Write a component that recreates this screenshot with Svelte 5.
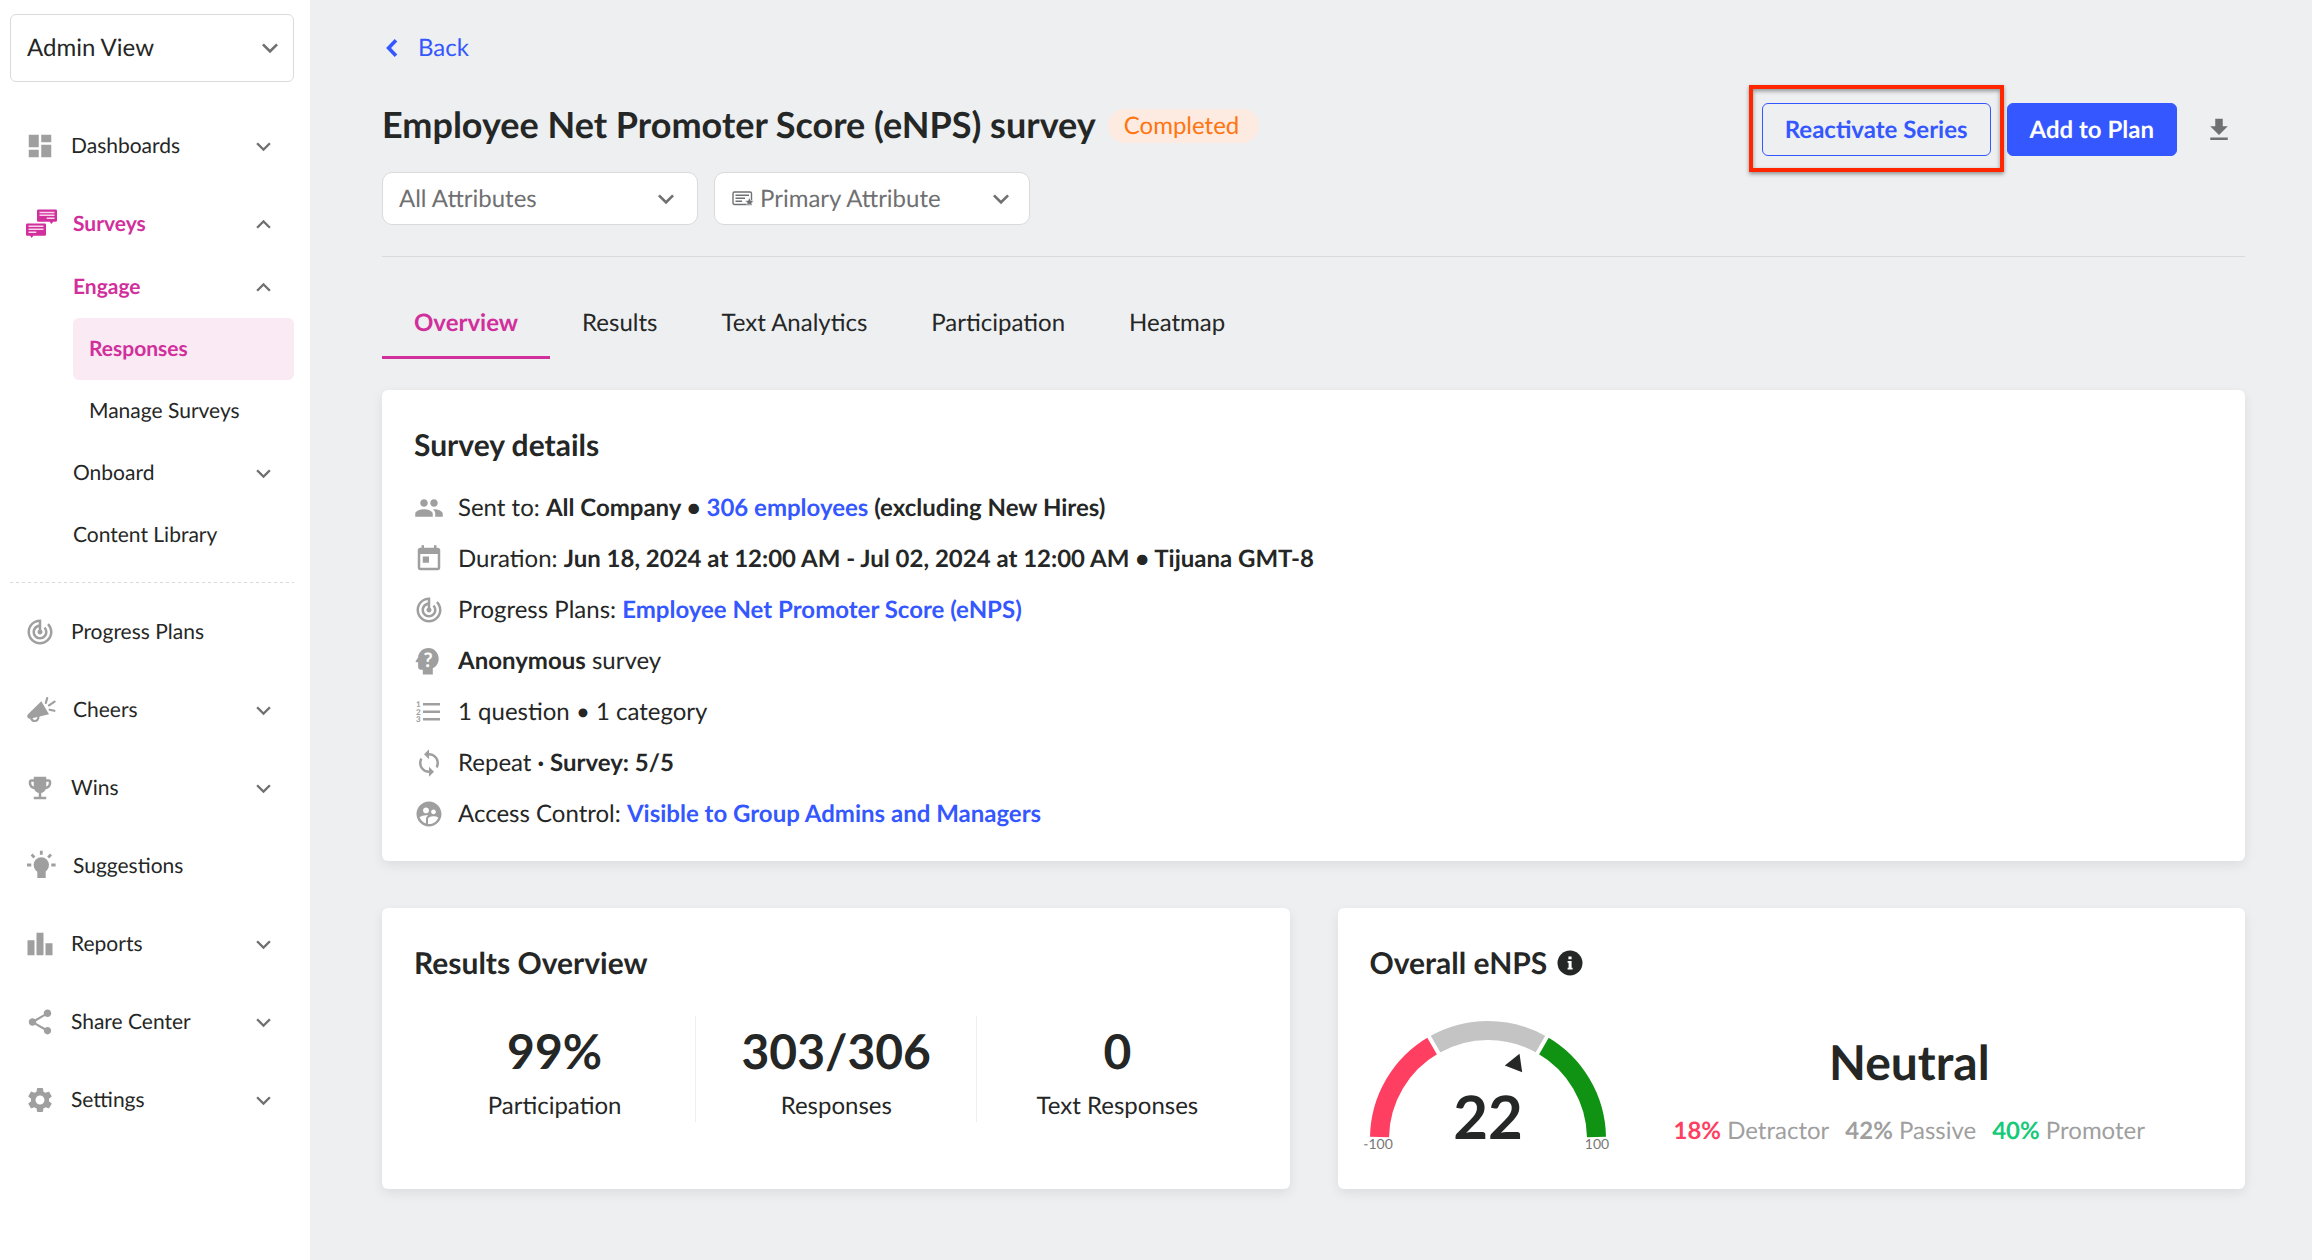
<script>
  let view = "Admin View";
  let activeTab = "Overview";

  const tabs = ["Overview", "Results", "Text Analytics", "Participation", "Heatmap"];

  const topNav = [
    { label: "Dashboards", icon: "dashboard", expandable: true },
    {
      label: "Surveys",
      icon: "surveys",
      custom: true,
      expandable: true,
      open: true,
      children: [
        { label: "Engage", expandable: true, open: true },
        { label: "Responses", nested: true, active: true },
        { label: "Manage Surveys", nested: true },
        { label: "Onboard", expandable: true },
        { label: "Content Library" },
      ],
    },
  ];

  const bottomNav = [
    { label: "Progress Plans", icon: "track" },
    { label: "Cheers", icon: "cheers", custom: true, expandable: true },
    { label: "Wins", icon: "trophy", expandable: true },
    { label: "Suggestions", icon: "bulb", custom: true },
    { label: "Reports", icon: "bars", expandable: true },
    { label: "Share Center", icon: "share", expandable: true },
    { label: "Settings", icon: "gear", expandable: true },
  ];

  const stats = [
    { value: "99%", label: "Participation" },
    { value: "303/306", label: "Responses" },
    { value: "0", label: "Text Responses" },
  ];

  const breakdown = [
    { value: "18%", label: "Detractor", kind: "detractor" },
    { value: "42%", label: "Passive", kind: "passive" },
    { value: "40%", label: "Promoter", kind: "promoter" },
  ];

  // 24x24 icon outlines
  const paths = {
    dashboard: "M3 13h8V3H3v10zm0 8h8v-6H3v6zm10 0h8V11h-8v10zm0-18v6h8V3h-8z",
    track:
      "M19.07 4.93l-1.41 1.41C19.1 7.79 20 9.79 20 12c0 4.42-3.58 8-8 8s-8-3.58-8-8c0-4.08 3.05-7.44 7-7.93v2.02C8.16 6.57 6 9.03 6 12c0 3.31 2.69 6 6 6s6-2.69 6-6c0-1.66-.67-3.16-1.76-4.24l-1.41 1.41C15.55 9.9 16 10.9 16 12c0 2.21-1.79 4-4 4s-4-1.79-4-4c0-1.86 1.28-3.41 3-3.86v2.14c-.6.35-1 .98-1 1.72 0 1.1.9 2 2 2s2-.9 2-2c0-.74-.4-1.38-1-1.72V2h-1C6.48 2 2 6.48 2 12s4.48 10 10 10 10-4.48 10-10c0-2.76-1.12-5.26-2.93-7.07z",
    trophy:
      "M19 5h-2V3H7v2H5c-1.1 0-2 .9-2 2v1c0 2.55 1.92 4.63 4.39 4.94.63 1.5 1.98 2.63 3.61 2.96V19H7v2h10v-2h-4v-3.1c1.63-.33 2.98-1.46 3.61-2.96C19.08 12.63 21 10.55 21 8V7c0-1.1-.9-2-2-2zM5 8V7h2v3.82C5.84 10.4 5 9.3 5 8zm14 0c0 1.3-.84 2.4-2 2.82V7h2v1z",
    bars: "M2 9h5.6v12H2zM9.2 3h5.6v18H9.2zM16.4 11.4H22V21h-5.6z",
    share:
      "M18 16.08c-.76 0-1.44.3-1.96.77L8.91 12.7c.05-.23.09-.46.09-.7s-.04-.47-.09-.7l7.05-4.11c.54.5 1.25.81 2.04.81 1.66 0 3-1.34 3-3s-1.34-3-3-3-3 1.34-3 3c0 .24.04.47.09.7L8.04 9.81C7.5 9.31 6.79 9 6 9c-1.66 0-3 1.34-3 3s1.34 3 3 3c.79 0 1.5-.31 2.04-.81l7.12 4.16c-.05.21-.08.43-.08.65 0 1.61 1.31 2.92 2.92 2.92s2.92-1.31 2.92-2.92-1.31-2.92-2.92-2.92z",
    gear: "M19.14 12.94c.04-.3.06-.61.06-.94 0-.32-.02-.64-.07-.94l2.03-1.58c.18-.14.23-.41.12-.61l-1.92-3.32c-.12-.22-.37-.29-.59-.22l-2.39.96c-.5-.38-1.03-.7-1.62-.94l-.36-2.54c-.04-.24-.24-.41-.48-.41h-3.84c-.24 0-.43.17-.47.41l-.36 2.54c-.59.24-1.13.57-1.62.94l-2.39-.96c-.22-.08-.47 0-.59.22L2.74 8.87c-.12.21-.08.47.12.61l2.03 1.58c-.05.3-.09.63-.09.94s.02.64.07.94l-2.03 1.58c-.18.14-.23.41-.12.61l1.92 3.32c.12.22.37.29.59.22l2.39-.96c.5.38 1.03.7 1.62.94l.36 2.54c.05.24.24.41.48.41h3.84c.24 0 .44-.17.47-.41l.36-2.54c.59-.24 1.13-.56 1.62-.94l2.39.96c.22.08.47 0 .59-.22l1.92-3.32c.12-.22.07-.47-.12-.61l-2.01-1.58zM12 15.6c-1.98 0-3.6-1.62-3.6-3.6s1.62-3.6 3.6-3.6 3.6 1.62 3.6 3.6-1.62 3.6-3.6 3.6z",
    people:
      "M16 11c1.66 0 2.99-1.34 2.99-3S17.66 5 16 5c-1.66 0-3 1.34-3 3s1.34 3 3 3zm-8 0c1.66 0 2.99-1.34 2.99-3S9.66 5 8 5C6.34 5 5 6.34 5 8s1.34 3 3 3zm0 2c-2.33 0-7 1.17-7 3.5V19h14v-2.5c0-2.33-4.67-3.5-7-3.5zm8 0c-.29 0-.62.02-.97.05 1.16.84 1.97 1.97 1.97 3.45V19h6v-2.5c0-2.33-4.67-3.5-7-3.5z",
    today:
      "M19 3h-1V1h-2v2H8V1H6v2H5c-1.11 0-1.99.9-1.99 2L3 19c0 1.1.89 2 2 2h14c1.1 0 2-.9 2-2V5c0-1.1-.9-2-2-2zm0 16H5V8h14v11zM7 10h5v5H7z",
    sync: "M12 4V1L8 5l4 4V6c3.31 0 6 2.69 6 6 0 1.01-.25 1.97-.7 2.8l1.46 1.46C19.54 15.03 20 13.57 20 12c0-4.42-3.58-8-8-8zm0 14c-3.31 0-6-2.69-6-6 0-1.01.25-1.97.7-2.8L5.24 7.74C4.46 8.97 4 10.43 4 12c0 4.42 3.58 8 8 8v3l4-4-4-4v3z",
    access:
      "M11.99 2c-5.52 0-10 4.48-10 10s4.48 10 10 10 10-4.48 10-10-4.48-10-10-10zm3.61 6.34c1.07 0 1.93.86 1.93 1.93 0 1.07-.86 1.93-1.93 1.93-1.07 0-1.93-.86-1.93-1.93-.01-1.07.86-1.93 1.93-1.93zm-6-1.58c1.3 0 2.36 1.06 2.36 2.36 0 1.3-1.06 2.36-2.36 2.36s-2.36-1.06-2.36-2.36c0-1.31 1.05-2.36 2.36-2.36zm0 9.13v3.75c-2.4-.75-4.3-2.6-5.14-4.96 1.05-1.12 3.67-1.69 5.14-1.69.53 0 1.2.08 1.9.22-1.64.87-1.9 2.02-1.9 2.68zM11.99 20c-.27 0-.53-.01-.79-.04v-4.07c0-1.42 2.94-2.13 4.4-2.13 1.07 0 2.92.39 3.84 1.15-1.17 2.97-4.06 5.09-7.45 5.09z",
    down: "M16.59 8.59L12 13.17 7.41 8.59 6 10l6 6 6-6z",
    up: "M12 8l-6 6 1.41 1.41L12 10.83l4.59 4.58L18 14z",
    download: "M19 9h-4V3H9v6H5l7 7 7-7zM5 18v2h14v-2H5z",
  };
</script>

{#snippet icon(name, size = "md")}
  <svg class="icon icon--{size}" viewBox="0 0 24 24" aria-hidden="true">
    <path d={paths[name]} />
  </svg>
{/snippet}

{#snippet customIcon(name)}
  <svg class="icon icon--lg" viewBox="0 0 32 32" aria-hidden="true">
    {#if name === "surveys"}
      <path d="M13.3 1.5h17.4q1.3 0 1.3 1.3v9.7q0 1.3-1.3 1.3h-2.6L26.4 16l-1.6-2.2H13.3q-1.3 0-1.3-1.3V2.8q0-1.3 1.3-1.3z" />
      <path d="M2.3 15.5h17.4q1.3 0 1.3 1.3v9.7q0 1.3-1.3 1.3H8.3L6.7 30l-1.6-2.2H2.3Q1 27.8 1 26.5v-9.7q0-1.3 1.3-1.3z" />
      <path class="lines" d="M14.5 4.5h15M14.5 7.3h15M21.7 10.3h7.8M3.5 18.3h15M3.5 21.3h15M3.5 24.3h7.8" />
    {:else if name === "cheers"}
      <path d="M16.3 7.3L24 20.3 6 24.5q-2.8.6-3.6-1.2-.8-1.7.6-3z" />
      <path class="stroke" d="M6 23.5q.6 3.5 3.8 3.5 3.4 0 3.7-4.5M22.2 4l-1.4 5M29.6 7.7L24 11.4M24.6 15.7l4.8 1.1" />
    {:else}
      <circle cx="16.3" cy="15" r="7.7" />
      <path d="M12.3 20h8.4v8h-8.4z" />
      <path class="stroke stroke--flat" d="M16.3.8v4M2 15h4.3M26.3 15h4.3M6.6 4.6l2.8 2.8M26 4.6l-2.8 2.8" />
    {/if}
  </svg>
{/snippet}

{#snippet navItem(item)}
  <button class="nav__item" class:nav__item--active={item.children}>
    {#if item.custom}
      {@render customIcon(item.icon)}
    {:else}
      {@render icon(item.icon)}
    {/if}
    <span class="nav__label">{item.label}</span>
    {#if item.expandable}
      <span class="nav__arrow">{@render icon(item.open ? "up" : "down", "sm")}</span>
    {/if}
  </button>
{/snippet}

<div class="layout">
  <aside class="sidebar">
    <div class="select select--view">
      <select aria-label="View" bind:value={view}>
        <option>Admin View</option>
      </select>
      <span class="select__arrow">{@render icon("down", "lg")}</span>
    </div>

    <nav class="nav">
      {#each topNav as item}
        {@render navItem(item)}
        {#if item.children}
          <div class="subnav">
            {#each item.children as child}
              <button
                class="subnav__item"
                class:subnav__item--nested={child.nested}
                class:subnav__item--current={child.active}
                class:subnav__item--open={child.open}>
                <span class="nav__label">{child.label}</span>
                {#if child.expandable}
                  <span class="nav__arrow">{@render icon(child.open ? "up" : "down", "sm")}</span>
                {/if}
              </button>
            {/each}
          </div>
        {/if}
      {/each}
    </nav>

    <hr class="sidebar__divider" />

    <nav class="nav">
      {#each bottomNav as item}
        {@render navItem(item)}
      {/each}
    </nav>
  </aside>

  <main class="main">
    <a class="back" href="#back">
      <svg class="back__icon" viewBox="0 0 12 18" aria-hidden="true">
        <path d="M10 1.3L2.6 9l7.4 7.7" />
      </svg>
      Back
    </a>

    <header class="header">
      <div class="header__info">
        <div class="header__title">
          <h1>Employee Net Promoter Score (eNPS) survey</h1>
          <span class="badge">Completed</span>
        </div>
        <div class="filters">
          <div class="select">
            <select aria-label="Attributes">
              <option>All Attributes</option>
            </select>
            <span class="select__arrow">{@render icon("down", "lg")}</span>
          </div>
          <div class="select select--icon">
            <svg class="select__icon" viewBox="0 0 22 18" aria-hidden="true">
              <rect x="1" y="2" width="18.5" height="12.5" rx="1.5" />
              <path d="M3.5 5.3h13.5M3.5 8.3h9.5M3.5 11.3h6.5" />
              <path class="star" d="M17.4 7.4l1.3 3 3.2.3-2.4 2.1.7 3.2-2.8-1.7-2.8 1.7.7-3.2-2.4-2.1 3.2-.3z" />
            </svg>
            <select aria-label="Primary attribute">
              <option>Primary Attribute</option>
            </select>
            <span class="select__arrow">{@render icon("down", "lg")}</span>
          </div>
        </div>
      </div>
      <div class="actions">
        <div class="highlight">
          <button class="btn btn--outline">Reactivate Series</button>
        </div>
        <button class="btn btn--primary">Add to Plan</button>
        <button class="btn-icon" aria-label="Download">{@render icon("download")}</button>
      </div>
    </header>

    <div class="tabs" role="tablist">
      {#each tabs as tab}
        <button
          class="tab"
          class:tab--active={tab === activeTab}
          role="tab"
          aria-selected={tab === activeTab}
          on:click={() => (activeTab = tab)}>{tab}</button>
      {/each}
    </div>

    <section class="card">
      <h2>Survey details</h2>
      <ul class="details">
        <li>
          {@render icon("people")}
          <p>Sent to: <b>All Company • <a href="#employees">306 employees</a> (excluding New Hires)</b></p>
        </li>
        <li>
          {@render icon("today")}
          <p>Duration: <b>Jun 18, 2024 at 12:00 AM - Jul 02, 2024 at 12:00 AM • Tijuana GMT-8</b></p>
        </li>
        <li>
          {@render icon("track")}
          <p>Progress Plans: <b><a href="#plan">Employee Net Promoter Score (eNPS)</a></b></p>
        </li>
        <li>
          <svg class="icon icon--md" viewBox="0 0 30 30" aria-hidden="true">
            <path d="M14.5 2C8.8 2 4.4 6.2 4.1 11.5L1.7 15.1c-.4.6 0 1.2.6 1.2h1.8v4.8c0 1.5 1.2 2.7 2.7 2.7h2v4.7h10v-6.2c3.5-1.7 5.9-5.3 5.9-9.6C24.7 6.8 20.1 2 14.5 2z" />
            <text class="glyph" x="14" y="21">?</text>
          </svg>
          <p><b>Anonymous</b> survey</p>
        </li>
        <li>
          <svg class="icon icon--md" viewBox="0 0 30 30" aria-hidden="true">
            <path d="M9 6h17v2.5H9zM9 13.5h17V16H9zM9 21h17v2.5H9z" />
            <text class="number" x="2" y="10">1</text>
            <text class="number" x="2" y="17.5">2</text>
            <text class="number" x="2" y="25">3</text>
          </svg>
          <p>1 question • 1 category</p>
        </li>
        <li>
          {@render icon("sync")}
          <p>Repeat <b>· Survey: 5/5</b></p>
        </li>
        <li>
          {@render icon("access")}
          <p>Access Control: <b><a href="#access">Visible to Group Admins and Managers</a></b></p>
        </li>
      </ul>
    </section>

    <div class="cards">
      <section class="card">
        <h2>Results Overview</h2>
        <div class="stats">
          {#each stats as stat}
            <div class="stat">
              <strong>{stat.value}</strong>
              <span>{stat.label}</span>
            </div>
          {/each}
        </div>
      </section>

      <section class="card">
        <h2>
          Overall eNPS
          <svg class="info" viewBox="0 0 26 26" aria-hidden="true">
            <circle cx="13" cy="13" r="12.5" />
            <path d="M11.4 6.5h3.2v2.7h-3.2zM10.6 11h4v6.8h1v1.7h-5v-1.7h1v-5.1h-1z" />
          </svg>
        </h2>
        <div class="enps">
          <svg class="gauge" viewBox="0 0 236 132" role="img" aria-label="eNPS score 22">
            <path class="gauge__low" d="M9.5 118A108.5 108.5 0 0 1 63.75 26.04" />
            <path class="gauge__mid" d="M63.75 26.04A108.5 108.5 0 0 1 172.25 26.04" />
            <path class="gauge__high" d="M172.25 26.04A108.5 108.5 0 0 1 226.5 118" />
            <path class="gauge__gap" d="M70 36.86L58 16.08M166 36.86L178 16.08" />
            <path class="gauge__needle" d="M149.5 34.8L134.8 46.5l17.4 6.7z" />
            <text class="gauge__score" x="118" y="120">22</text>
            <text class="gauge__limit" x="8" y="130">-100</text>
            <text class="gauge__limit" x="227" y="130">100</text>
          </svg>
          <div class="enps__summary">
            <strong>Neutral</strong>
            <ul class="breakdown">
              {#each breakdown as part}
                <li><b class={part.kind}>{part.value}</b> {part.label}</li>
              {/each}
            </ul>
          </div>
        </div>
      </section>
    </div>
  </main>
</div>

<style>
  :global(body) {
    background: #edeff1;
    color: #252726;
    font-family: Lato, "Open Sans", sans-serif;
    font-size: 24px;
    line-height: 32px;
    text-rendering: geometricPrecision;
  }
  h1,
  h2,
  p,
  ul {
    margin: 0;
    padding: 0;
  }
  ul {
    list-style: none;
  }
  a {
    color: #3557ff;
    text-decoration: none;
  }
  button,
  select {
    font: inherit;
    color: inherit;
    text-rendering: inherit;
    background: none;
    border: none;
    margin: 0;
    padding: 0;
    cursor: pointer;
  }

  .layout {
    display: flex;
    min-height: 100vh;
  }

  .icon {
    display: block;
    flex: none;
    fill: #9f9f9f;
  }
  .icon--sm {
    width: 29px;
    height: 29px;
  }
  .icon--md {
    width: 30px;
    height: 30px;
  }
  .icon--lg {
    width: 32px;
    height: 32px;
  }
  .icon .lines {
    fill: none;
    stroke: #f9d5ec;
    stroke-width: 1.6;
  }
  .icon .stroke {
    fill: none;
    stroke: #9f9f9f;
    stroke-width: 2.2;
    stroke-linecap: round;
  }
  .icon .stroke--flat {
    stroke-width: 2.8;
    stroke-linecap: butt;
  }
  .icon .glyph {
    fill: #fff;
    font-size: 20px;
    font-weight: 700;
    text-anchor: middle;
  }
  .icon .number {
    font-size: 8px;
    font-weight: 900;
    text-anchor: start;
  }

  .sidebar {
    flex: none;
    box-sizing: border-box;
    width: 310px;
    padding: 14px 16px 14px 10px;
    background: #fff;
    font-size: 21px;
  }
  .sidebar__divider {
    height: 1px;
    margin: 16px 0 18px;
    border: none;
    background: repeating-linear-gradient(90deg, #d9d9d9 0 3px, transparent 3px 6px);
  }
  .nav {
    display: flex;
    flex-direction: column;
  }
  .select--view + .nav {
    margin-top: 33px;
  }
  .nav__item,
  .subnav__item {
    display: flex;
    align-items: center;
    height: 62px;
    text-align: left;
  }
  .nav__item {
    gap: 16px;
    margin-bottom: 16px;
    padding: 0 16px 0 15px;
  }
  .nav__item--active {
    margin-bottom: 1px;
    color: #d12f9b;
    font-weight: 700;
  }
  .nav__item--active .icon {
    fill: #d12f9b;
  }
  .nav__label {
    flex: 1;
  }
  .nav__arrow .icon,
  .select__arrow .icon {
    fill: #6f7072;
  }
  .subnav {
    display: flex;
    flex-direction: column;
    padding-left: 63px;
  }
  .subnav__item {
    padding-right: 16px;
    border-radius: 6px;
  }
  .subnav__item--nested {
    padding-left: 16px;
  }
  .subnav__item--open,
  .subnav__item--current {
    color: #d12f9b;
    font-weight: 700;
  }
  .subnav__item--current {
    background: #faeaf4;
  }

  .select {
    position: relative;
    display: flex;
    align-items: center;
    box-sizing: border-box;
    width: 316px;
    height: 53px;
    border: 1px solid #d8dadb;
    border-radius: 10px;
    background: #fff;
    color: #6f7072;
  }
  .select select {
    appearance: none;
    width: 100%;
    height: 100%;
    padding: 0 48px 0 16px;
    outline: none;
  }
  .select__arrow {
    position: absolute;
    right: 15px;
    pointer-events: none;
  }
  .select--view {
    width: auto;
    height: 68px;
    border-radius: 6px;
    color: #252726;
    font-size: 24px;
  }
  .select--view .select__arrow {
    right: 7px;
  }
  .select__icon {
    position: absolute;
    left: 17px;
    width: 22px;
    height: 18px;
    fill: none;
    stroke: #6f7072;
    stroke-width: 1.4;
    pointer-events: none;
  }
  .select__icon .star {
    fill: #6f7072;
    stroke: #fff;
    stroke-width: 0.6;
  }
  .select--icon select {
    padding-left: 45px;
  }
  .select--icon .select__arrow {
    right: 12px;
  }

  .main {
    flex: 1;
    min-width: 0;
    padding: 32px 67px 32px 72px;
  }
  .back {
    display: inline-flex;
    align-items: center;
    gap: 20px;
    padding-left: 4px;
  }
  .back__icon {
    width: 12px;
    height: 18px;
    fill: none;
    stroke: #3557ff;
    stroke-width: 3.6;
  }

  .header {
    display: flex;
    justify-content: space-between;
    align-items: flex-start;
    padding: 36px 0 31px;
    border-bottom: 1px solid #d8dadb;
  }
  .header__title {
    display: flex;
    align-items: center;
    gap: 12px;
    margin-bottom: 25px;
  }
  h1 {
    font-size: 36px;
    line-height: 46px;
    font-weight: 700;
  }
  .badge {
    margin-top: 3px;
    padding: 1px 20px 1px 16px;
    border-radius: 17px;
    background: #fdeae0;
    color: #ff7512;
  }
  .filters {
    display: flex;
    gap: 16px;
  }
  .actions {
    display: flex;
    align-items: center;
    gap: 16px;
    padding-top: 2px;
  }
  .highlight {
    position: relative;
  }
  .highlight::after {
    content: "";
    position: absolute;
    inset: -18px -13px -16px;
    border: 4px solid #ff2600;
    box-shadow: 0 2px 4px rgba(0, 0, 0, 0.4), inset 0 2px 4px rgba(0, 0, 0, 0.4);
    pointer-events: none;
  }
  .btn {
    box-sizing: border-box;
    height: 53px;
    padding: 0 22px;
    border: 1px solid #3557ff;
    border-radius: 6px;
    font-weight: 700;
  }
  .btn--outline {
    color: #3557ff;
  }
  .btn--primary {
    background: #3557ff;
    color: #fff;
  }
  .btn-icon {
    padding: 11px;
  }
  .btn-icon .icon {
    fill: #6f7072;
  }

  .tabs {
    display: flex;
    margin: 40px 0 31px;
  }
  .tab {
    padding: 10px 32px 17px;
    border-bottom: 3px solid transparent;
  }
  .tab--active {
    border-color: #d12f9b;
    color: #d12f9b;
    font-weight: 700;
  }

  .card {
    padding: 32px 32px 31px;
    border-radius: 6px;
    background: #fff;
    box-shadow: 0 4px 12px rgba(0, 0, 0, 0.08);
  }
  h2 {
    display: flex;
    align-items: center;
    gap: 10px;
    font-size: 30px;
    line-height: 46px;
    font-weight: 700;
  }
  .info {
    width: 26px;
    height: 26px;
    fill: #252726;
  }
  .info path {
    fill: #fff;
  }
  .details {
    display: flex;
    flex-direction: column;
    gap: 19px;
    padding-top: 24px;
  }
  .details li {
    display: flex;
    align-items: center;
    gap: 14px;
  }

  .cards {
    display: grid;
    grid-template-columns: 1fr 1fr;
    gap: 48px;
    margin-top: 47px;
  }
  .stats {
    display: grid;
    grid-template-columns: repeat(3, 1fr);
    margin: 30px 0 36px;
  }
  .stat {
    display: flex;
    flex-direction: column;
    align-items: center;
    gap: 6px;
    padding-top: 4px;
  }
  .stat + .stat {
    border-left: 1px solid #edeff1;
  }
  .stat strong,
  .enps__summary strong {
    font-size: 48px;
    line-height: 64px;
    font-weight: 700;
  }

  .enps {
    display: flex;
    align-items: center;
    padding-top: 33px;
  }
  .gauge {
    flex: none;
    width: 236px;
    height: 132px;
    overflow: visible;
    fill: none;
    stroke-width: 19;
  }
  .gauge__low {
    stroke: #ff3f62;
  }
  .gauge__mid {
    stroke: #c4c4c4;
  }
  .gauge__high {
    stroke: #109212;
  }
  .gauge__gap {
    stroke: #fff;
    stroke-width: 4;
  }
  .gauge__needle,
  .gauge__score {
    fill: #252726;
  }
  .gauge__score,
  .gauge__limit {
    text-anchor: middle;
  }
  .gauge__score {
    font-size: 60px;
    font-weight: 700;
  }
  .gauge__limit {
    fill: #777;
    font-size: 14px;
  }
  .enps__summary {
    flex: 1;
    display: flex;
    flex-direction: column;
    align-items: center;
    gap: 20px;
    padding-top: 8px;
  }
  .breakdown {
    display: flex;
    gap: 16px;
    color: #9f9f9f;
  }
  .detractor {
    color: #ff3f62;
  }
  .promoter {
    color: #16ca79;
  }
</style>
